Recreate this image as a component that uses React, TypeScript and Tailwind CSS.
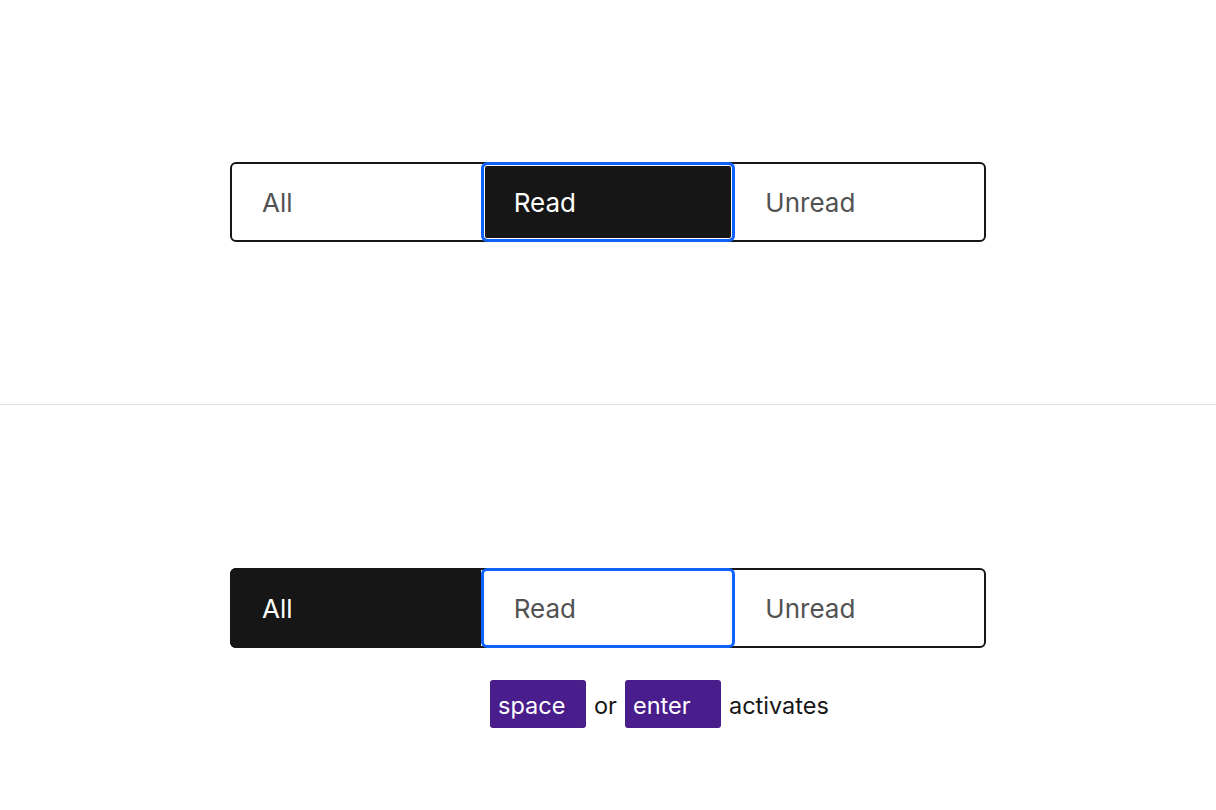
import React from "react";

const font = { fontFamily: 'Inter, "Noto Sans", sans-serif' };

function Switcher({ selected, focused }: { selected: number; focused: number }) {
  const items = ["All", "Read", "Unread"];
  return (
    <div className="flex h-[80px] w-[756px] rounded-md border-2 border-[#161616] bg-white">
      {items.map((label, i) => {
        const isSel = i === selected;
        const isFocus = i === focused;
        const first = i === 0;
        const last = i === items.length - 1;
        let cls = "flex flex-1 items-center pl-[30px] pt-[2px] text-[26px] leading-none ";
        if (isSel) cls += "bg-[#161616] text-white ";
        else cls += "text-[#525252] ";
        if (isFocus) {
          cls += "-my-[2px] border-[3px] border-[#0f62fe] rounded-md pl-[29px] ";
          if (isSel) cls += "shadow-[inset_0_0_0_1px_#ffffff] ";
        }
        if (isSel && first && !isFocus) cls += "-my-[2px] -ml-[2px] rounded-l-md pl-[32px] ";
        if (last) cls += "rounded-r-md ";
        return (
          <div key={label} className={cls}>
            <span>{label}</span>
          </div>
        );
      })}
    </div>
  );
}

function Key({ children }: { children: React.ReactNode }) {
  return (
    <span className="flex h-[48px] w-[96px] items-center rounded-[3px] bg-[#491d8b] pl-[8px] pt-[3px] text-white">
      {children}
    </span>
  );
}

export default function App() {
  return (
    <div className="flex h-[810px] w-full flex-col bg-white" style={font}>
      <div className="flex h-[404px] items-center justify-center">
        <Switcher selected={1} focused={1} />
      </div>
      <div className="h-[1px] w-full bg-[#e0e0e0]" />
      <div className="flex flex-col items-center pt-[163px]">
        <Switcher selected={0} focused={1} />
        <div className="mt-[32px] flex w-[756px] items-center gap-[8px] pl-[260px] text-[23.5px] text-[#161616]">
          <Key>space</Key>
          <span className="pt-[3px]">or</span>
          <Key>enter</Key>
          <span className="pt-[3px]">activates</span>
        </div>
      </div>
    </div>
  );
}
